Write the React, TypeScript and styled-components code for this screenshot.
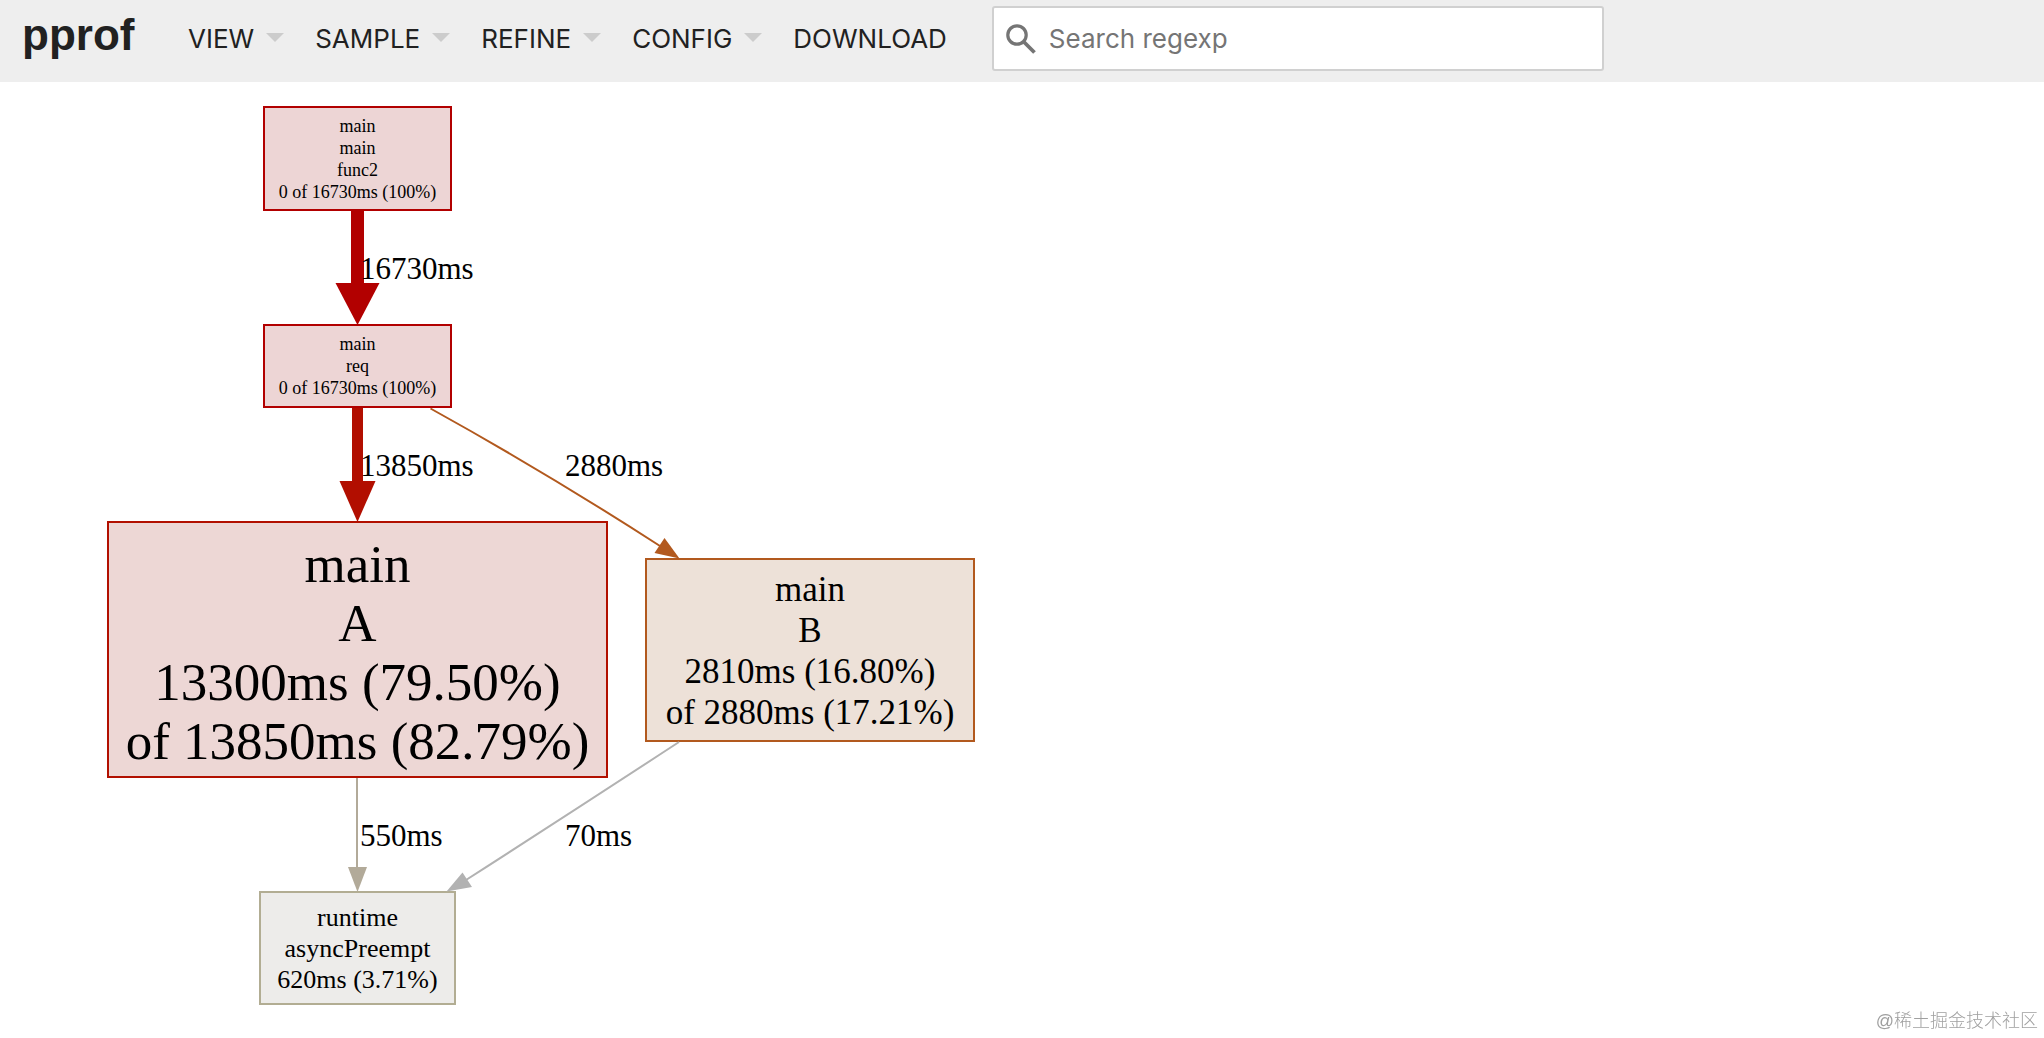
import React from "react";
import styled, { createGlobalStyle } from "styled-components";

const GlobalStyle = createGlobalStyle`
  *, *::before, *::after { box-sizing: border-box; }
  body {
    margin: 0;
    background: #fff;
    color: #212121;
    font-family: Inter, Roboto, "Liberation Sans", sans-serif;
  }
`;

const Header = styled.header`
  display: flex;
  align-items: center;
  height: 82px;
  padding: 0 22px 5px;
  background: #eee;
`;

const Title = styled.h1`
  flex: none;
  width: 166px;
  margin: 0;
  padding-bottom: 8px;
  font-family: "Liberation Sans", Arial, sans-serif;
  font-size: 44px;
  line-height: 52px;
  font-weight: 700;
`;

const Menu = styled.nav`
  display: flex;
  flex: none;
  gap: 31px;
  margin-right: 45px;
`;

const MenuButton = styled.button`
  display: flex;
  align-items: center;
  gap: 12px;
  padding: 0;
  border: 0;
  background: none;
  color: inherit;
  font: inherit;
  font-size: 26px;
  line-height: 32px;
  cursor: pointer;
`;

const DownloadLink = styled.a`
  color: inherit;
  font-size: 26px;
  line-height: 32px;
  text-decoration: none;
`;

const Caret = styled.span`
  margin-bottom: 2px;
  border: 9px solid transparent;
  border-top-color: #ccc;
  border-bottom-width: 0;
`;

const SearchBox = styled.label`
  display: flex;
  align-items: center;
  flex: 0 1 612px;
  min-width: 0;
  height: 65px;
  padding: 0 12px;
  gap: 13px;
  border: 2px solid #d0d0d0;
  border-radius: 3px;
  background: #fff;
`;

const SearchInput = styled.input`
  flex: 1;
  min-width: 0;
  padding: 0;
  border: 0;
  outline: 0;
  background: none;
  color: #212121;
  font: inherit;
  font-size: 26px;
  line-height: 32px;
  &::placeholder { color: #757575; opacity: 1; }
`;

const Graph = styled.main`
  position: relative;
  height: 956px;
  overflow: hidden;
  color: #000;
  font-family: "Liberation Serif", "Times New Roman", serif;
`;

const Edges = styled.svg`
  position: absolute;
  top: 0;
  left: 0;
`;

type NodeProps = {
  $x: number;
  $y: number;
  $w: number;
  $h: number;
  $size: number;
  $line: number;
  $stroke: string;
  $fill: string;
};

const Node = styled.section<NodeProps>`
  position: absolute;
  left: ${(p) => p.$x}px;
  top: ${(p) => p.$y}px;
  display: flex;
  flex-direction: column;
  align-items: center;
  justify-content: center;
  width: ${(p) => p.$w}px;
  height: ${(p) => p.$h}px;
  padding-top: ${(p) => (p.$size > 40 ? 6 : p.$size > 30 ? 2 : 0)}px;
  border: 2px solid ${(p) => p.$stroke};
  background: ${(p) => p.$fill};
  font-size: ${(p) => p.$size}px;
  line-height: ${(p) => p.$line}px;
  white-space: nowrap;
`;

const EdgeLabel = styled.span<{ $x: number; $y: number }>`
  position: absolute;
  left: ${(p) => p.$x}px;
  top: ${(p) => p.$y}px;
  font-size: 31px;
  line-height: 34px;
`;

const Watermark = styled.footer`
  position: fixed;
  right: 6px;
  bottom: 4px;
  color: #a0a0a0;
  font-family: "Liberation Sans", "Noto Sans CJK SC", sans-serif;
  font-size: 18px;
  font-weight: 300;
  line-height: 26px;
`;

const menus = ["VIEW", "SAMPLE", "REFINE", "CONFIG"];

const nodes = [
  { x: 263, y: 24, w: 189, h: 105, size: 18, line: 22, stroke: "#b20000", fill: "#edd5d5",
    text: ["main", "main", "func2", "0 of 16730ms (100%)"] },
  { x: 263, y: 242, w: 189, h: 84, size: 18, line: 22, stroke: "#b20000", fill: "#edd5d5",
    text: ["main", "req", "0 of 16730ms (100%)"] },
  { x: 107, y: 439, w: 501, h: 257, size: 53, line: 59, stroke: "#b21000", fill: "#edd7d5",
    text: ["main", "A", "13300ms (79.50%)", "of 13850ms (82.79%)"] },
  { x: 645, y: 476, w: 330, h: 184, size: 35, line: 41, stroke: "#b2591e", fill: "#ede1d8",
    text: ["main", "B", "2810ms (16.80%)", "of 2880ms (17.21%)"] },
  { x: 259, y: 809, w: 197, h: 114, size: 26, line: 31, stroke: "#b2ad93", fill: "#edecea",
    text: ["runtime", "asyncPreempt", "620ms (3.71%)"] },
];

const edges = [
  { color: "#b20000", width: 13, path: "M357.5 129V202", head: "335.5,201 379.5,201 357.5,243" },
  { color: "#b20e00", width: 11, path: "M357.5 326V400", head: "339.5,399 375.5,399 357.5,440" },
  { color: "#b2591e", width: 2, path: "M430.5 326.5Q547 391 660 464", head: "664.5,456 654.5,471 679.5,476.5" },
  { color: "#b2aa99", width: 2, path: "M357 696V786", head: "348,785 367,785 357.5,810" },
  { color: "#b2b2b2", width: 2, path: "M679 660Q575 728 466 798", head: "462.5,790.5 472,805 446.5,809.5" },
];

const labels = [
  { x: 360, y: 170, text: "16730ms" },
  { x: 360, y: 367, text: "13850ms" },
  { x: 565, y: 367, text: "2880ms" },
  { x: 360, y: 737, text: "550ms" },
  { x: 565, y: 737, text: "70ms" },
];

export default function App() {
  return (
    <>
      <GlobalStyle />
      <Header>
        <Title>pprof</Title>
        <Menu aria-label="Main">
          {menus.map((name) => (
            <MenuButton key={name} type="button" aria-haspopup="menu">
              {name}
              <Caret />
            </MenuButton>
          ))}
          <DownloadLink href="#download">DOWNLOAD</DownloadLink>
        </Menu>
        <SearchBox>
          <svg width="30" height="30" viewBox="0 0 30 30" fill="none" stroke="#757575" aria-hidden="true">
            <circle cx="11" cy="11" r="9.2" strokeWidth="3.2" />
            <path d="M17.5 17.5L28.5 28.5" strokeWidth="3.8" />
          </svg>
          <SearchInput type="text" placeholder="Search regexp" aria-label="Search regexp" />
        </SearchBox>
      </Header>
      <Graph>
        {nodes.map((n) => (
          <Node
            key={n.y}
            $x={n.x}
            $y={n.y}
            $w={n.w}
            $h={n.h}
            $size={n.size}
            $line={n.line}
            $stroke={n.stroke}
            $fill={n.fill}
          >
            {n.text.map((line, i) => (
              <span key={i}>{line}</span>
            ))}
          </Node>
        ))}
        <Edges width="1000" height="940" aria-hidden="true">
          {edges.map((e) => (
            <g key={e.path}>
              <path d={e.path} fill="none" stroke={e.color} strokeWidth={e.width} />
              <polygon points={e.head} fill={e.color} />
            </g>
          ))}
        </Edges>
        {labels.map((l) => (
          <EdgeLabel key={l.text} $x={l.x} $y={l.y}>
            {l.text}
          </EdgeLabel>
        ))}
      </Graph>
      <Watermark>@稀土掘金技术社区</Watermark>
    </>
  );
}
